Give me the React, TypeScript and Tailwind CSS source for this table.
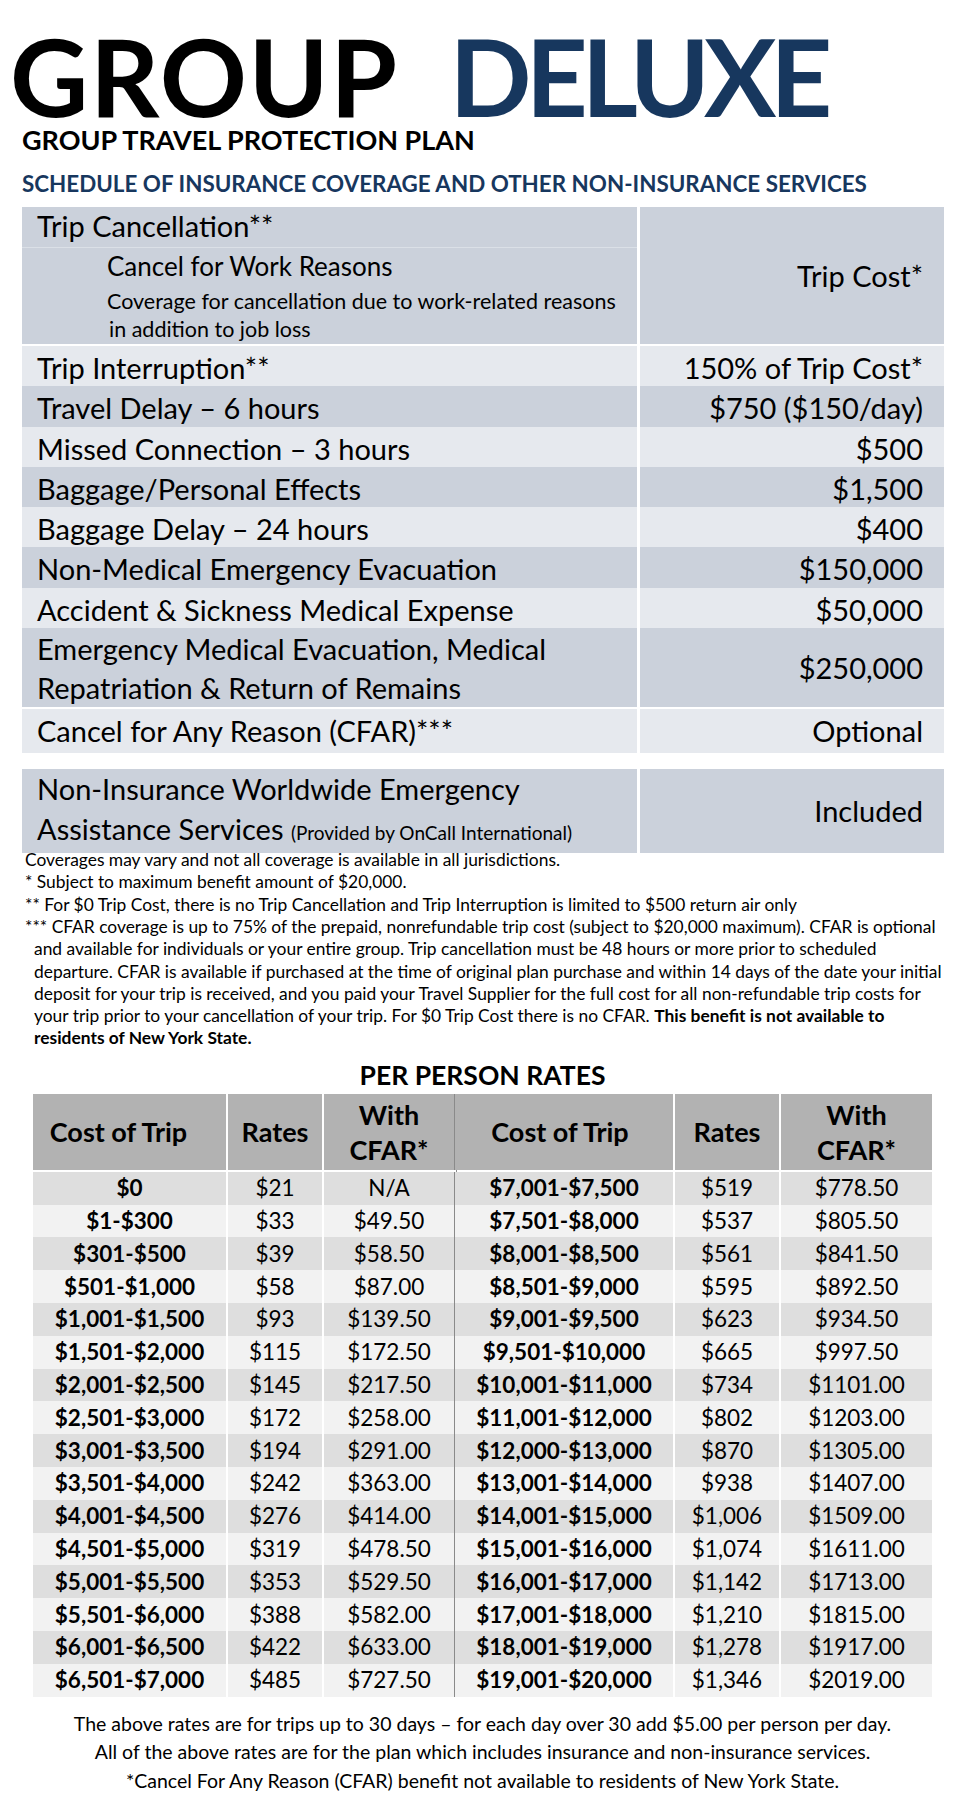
import React from "react";

const dark = "bg-[#cbd1db]";
const light = "bg-[#e6e9ee]";

type CoverRow = { label: string; value: string; tone: string };

const coverRows: CoverRow[] = [
  { label: "Trip Interruption**", value: "150% of Trip Cost*", tone: light },
  { label: "Travel Delay – 6 hours", value: "$750 ($150/day)", tone: dark },
  { label: "Missed Connection – 3 hours", value: "$500", tone: light },
  { label: "Baggage/Personal Effects", value: "$1,500", tone: dark },
  { label: "Baggage Delay – 24 hours", value: "$400", tone: light },
  { label: "Non-Medical Emergency Evacuation", value: "$150,000", tone: dark },
  { label: "Accident & Sickness Medical Expense", value: "$50,000", tone: light },
];

const leftRates = [
  ["$0", "$21", "N/A"],
  ["$1-$300", "$33", "$49.50"],
  ["$301-$500", "$39", "$58.50"],
  ["$501-$1,000", "$58", "$87.00"],
  ["$1,001-$1,500", "$93", "$139.50"],
  ["$1,501-$2,000", "$115", "$172.50"],
  ["$2,001-$2,500", "$145", "$217.50"],
  ["$2,501-$3,000", "$172", "$258.00"],
  ["$3,001-$3,500", "$194", "$291.00"],
  ["$3,501-$4,000", "$242", "$363.00"],
  ["$4,001-$4,500", "$276", "$414.00"],
  ["$4,501-$5,000", "$319", "$478.50"],
  ["$5,001-$5,500", "$353", "$529.50"],
  ["$5,501-$6,000", "$388", "$582.00"],
  ["$6,001-$6,500", "$422", "$633.00"],
  ["$6,501-$7,000", "$485", "$727.50"],
];

const rightRates = [
  ["$7,001-$7,500", "$519", "$778.50"],
  ["$7,501-$8,000", "$537", "$805.50"],
  ["$8,001-$8,500", "$561", "$841.50"],
  ["$8,501-$9,000", "$595", "$892.50"],
  ["$9,001-$9,500", "$623", "$934.50"],
  ["$9,501-$10,000", "$665", "$997.50"],
  ["$10,001-$11,000", "$734", "$1101.00"],
  ["$11,001-$12,000", "$802", "$1203.00"],
  ["$12,000-$13,000", "$870", "$1305.00"],
  ["$13,001-$14,000", "$938", "$1407.00"],
  ["$14,001-$15,000", "$1,006", "$1509.00"],
  ["$15,001-$16,000", "$1,074", "$1611.00"],
  ["$16,001-$17,000", "$1,142", "$1713.00"],
  ["$17,001-$18,000", "$1,210", "$1815.00"],
  ["$18,001-$19,000", "$1,278", "$1917.00"],
  ["$19,001-$20,000", "$1,346", "$2019.00"],
];

function RateRow({ i }: { i: number }) {
  const bg = i % 2 === 0 ? "bg-[#dedede]" : "bg-[#f2f2f2]";
  const l = leftRates[i];
  const r = rightRates[i];
  return (
    <div className={`flex h-[32.8px] items-center text-[22.5px] ${bg}`}>
      <div className="w-[193px] text-center font-bold">{l[0]}</div>
      <div className="w-[2px] self-stretch bg-white" />
      <div className="w-[94px] text-center">{l[1]}</div>
      <div className="w-[2px] self-stretch bg-white" />
      <div className="w-[130px] text-center">{l[2]}</div>
      <div className="w-[1px] self-stretch bg-[#8a8a8a]" />
      <div className="w-[218px] text-center font-bold">{r[0]}</div>
      <div className="w-[2px] self-stretch bg-white" />
      <div className="w-[104px] text-center">{r[1]}</div>
      <div className="w-[2px] self-stretch bg-white" />
      <div className="w-[151px] text-center">{r[2]}</div>
    </div>
  );
}

export default function App() {
  return (
    <div className="w-[956px] h-[1820px] overflow-hidden bg-white text-black font-['Lato','Noto_Sans',sans-serif]">
      {/* Heading */}
      <div className="pt-[25px]">
        <h1 className="pl-[10px] text-[108px] leading-[100px] font-bold whitespace-nowrap">
          <span className="tracking-[1.5px]">GROUP</span>
          <span className="ml-[51px] tracking-[-6px] text-[#17375e]">DELUXE</span>
        </h1>
        <h2 className="mt-[2px] pl-[22px] text-[27px] leading-[25px] font-bold whitespace-nowrap">
          GROUP TRAVEL PROTECTION PLAN
        </h2>
        <h3 className="mt-[21px] pl-[22px] text-[22.4px] leading-[21px] font-bold text-[#17375e] whitespace-nowrap">
          SCHEDULE OF INSURANCE COVERAGE AND OTHER NON-INSURANCE SERVICES
        </h3>
      </div>

      {/* Coverage table */}
      <div className="mt-[13px] ml-[22px] w-[922px] flex flex-col gap-[2px] text-[29px]">
        <div className="grid grid-cols-[615px_304px] gap-x-[3px] h-[137px]">
          <div className={`${dark} flex flex-col`}>
            <div className="h-[41px] flex items-center pl-[15px] pb-[3px] border-b border-[#dbe0e7]">
              Trip Cancellation**
            </div>
            <div className="pl-[85px]">
              <div className="text-[26px] leading-[36px]">Cancel for Work Reasons</div>
              <div className="mt-[3px] text-[21.5px] leading-[28px]">
                Coverage for cancellation due to work-related reasons
              </div>
              <div className="pl-[2px] text-[21.5px] leading-[28px]">in addition to job loss</div>
            </div>
          </div>
          <div className={`${dark} flex items-center justify-end pr-[21px]`}>Trip Cost*</div>
        </div>

        {coverRows.map((r) => (
          <div key={r.label} className="grid grid-cols-[615px_304px] gap-x-[3px] h-[38.3px]">
            <div className={`${r.tone} flex items-center pl-[15px]`}>{r.label}</div>
            <div className={`${r.tone} flex items-center justify-end pr-[21px]`}>{r.value}</div>
          </div>
        ))}

        <div className="grid grid-cols-[615px_304px] gap-x-[3px] h-[79px]">
          <div className={`${dark} flex flex-col justify-center pl-[15px] leading-[39px]`}>
            <div>Emergency Medical Evacuation, Medical</div>
            <div>Repatriation &amp; Return of Remains</div>
          </div>
          <div className={`${dark} flex items-center justify-end pr-[21px]`}>$250,000</div>
        </div>

        <div className="grid grid-cols-[615px_304px] gap-x-[3px] h-[39px]">
          <div className={`${light} flex items-center pl-[15px]`}>Cancel for Any Reason (CFAR)***</div>
          <div className={`${light} flex items-center justify-end pr-[21px]`}>Optional</div>
        </div>

        <div className="mt-[19px] grid grid-cols-[615px_304px] gap-x-[3px] h-[80px]">
          <div className={`${dark} flex flex-col justify-center pl-[15px] leading-[40px]`}>
            <div>Non-Insurance Worldwide Emergency</div>
            <div>
              Assistance Services <span className="text-[19px]">(Provided by OnCall International)</span>
            </div>
          </div>
          <div className={`${dark} flex items-center justify-end pr-[21px]`}>Included</div>
        </div>
      </div>

      {/* Footnotes */}
      <div className="pl-[25px] text-[17.4px] leading-[22.3px] whitespace-nowrap">
        <div>Coverages may vary and not all coverage is available in all jurisdictions.</div>
        <div>* Subject to maximum benefit amount of $20,000.</div>
        <div>** For $0 Trip Cost, there is no Trip Cancellation and Trip Interruption is limited to $500 return air only</div>
        <div>
          *** CFAR coverage is up to 75% of the prepaid, nonrefundable trip cost (subject to $20,000 maximum). CFAR is optional
        </div>
        <div className="pl-[9px]">
          <div>and available for individuals or your entire group. Trip cancellation must be 48 hours or more prior to scheduled</div>
          <div>departure. CFAR is available if purchased at the time of original plan purchase and within 14 days of the date your initial</div>
          <div>deposit for your trip is received, and you paid your Travel Supplier for the full cost for all non-refundable trip costs for</div>
          <div>
            your trip prior to your cancellation of your trip. For $0 Trip Cost there is no CFAR.{" "}
            <span className="font-bold">This benefit is not available to</span>
          </div>
          <div className="font-bold">residents of New York State.</div>
        </div>
      </div>

      {/* Rates */}
      <div className="ml-[33px] w-[899px]">
        <div className="mt-[10px] text-center text-[26.5px] leading-[30px] font-bold">PER PERSON RATES</div>
        <div className="mt-[4px] flex h-[76px] bg-[#b2b2b2] font-bold text-[27px] leading-[35px] text-center">
          <div className="w-[193px] flex items-center justify-center pr-[22px]">Cost of Trip</div>
          <div className="w-[2px] bg-white" />
          <div className="w-[94px] flex items-center justify-center">Rates</div>
          <div className="w-[2px] bg-white" />
          <div className="w-[130px] flex flex-col items-center justify-center">
            <span>With</span>
            <span>CFAR*</span>
          </div>
          <div className="w-[1px] bg-[#8a8a8a]" />
          <div className="w-[218px] flex items-center justify-center pr-[8px]">Cost of Trip</div>
          <div className="w-[2px] bg-white" />
          <div className="w-[104px] flex items-center justify-center">Rates</div>
          <div className="w-[2px] bg-white" />
          <div className="w-[151px] flex flex-col items-center justify-center">
            <span>With</span>
            <span>CFAR*</span>
          </div>
        </div>
        <div className="h-[2px] flex">
          <div className="w-[423px]" />
          <div className="w-[1px] bg-[#8a8a8a]" />
        </div>
        {leftRates.map((_, i) => (
          <RateRow key={i} i={i} />
        ))}
        <div className="mt-[13px] text-center text-[19.5px] leading-[28.5px]">
          <div>The above rates are for trips up to 30 days – for each day over 30 add $5.00 per person per day.</div>
          <div>All of the above rates are for the plan which includes insurance and non-insurance services.</div>
          <div>*Cancel For Any Reason (CFAR) benefit not available to residents of New York State.</div>
        </div>
      </div>
    </div>
  );
}
